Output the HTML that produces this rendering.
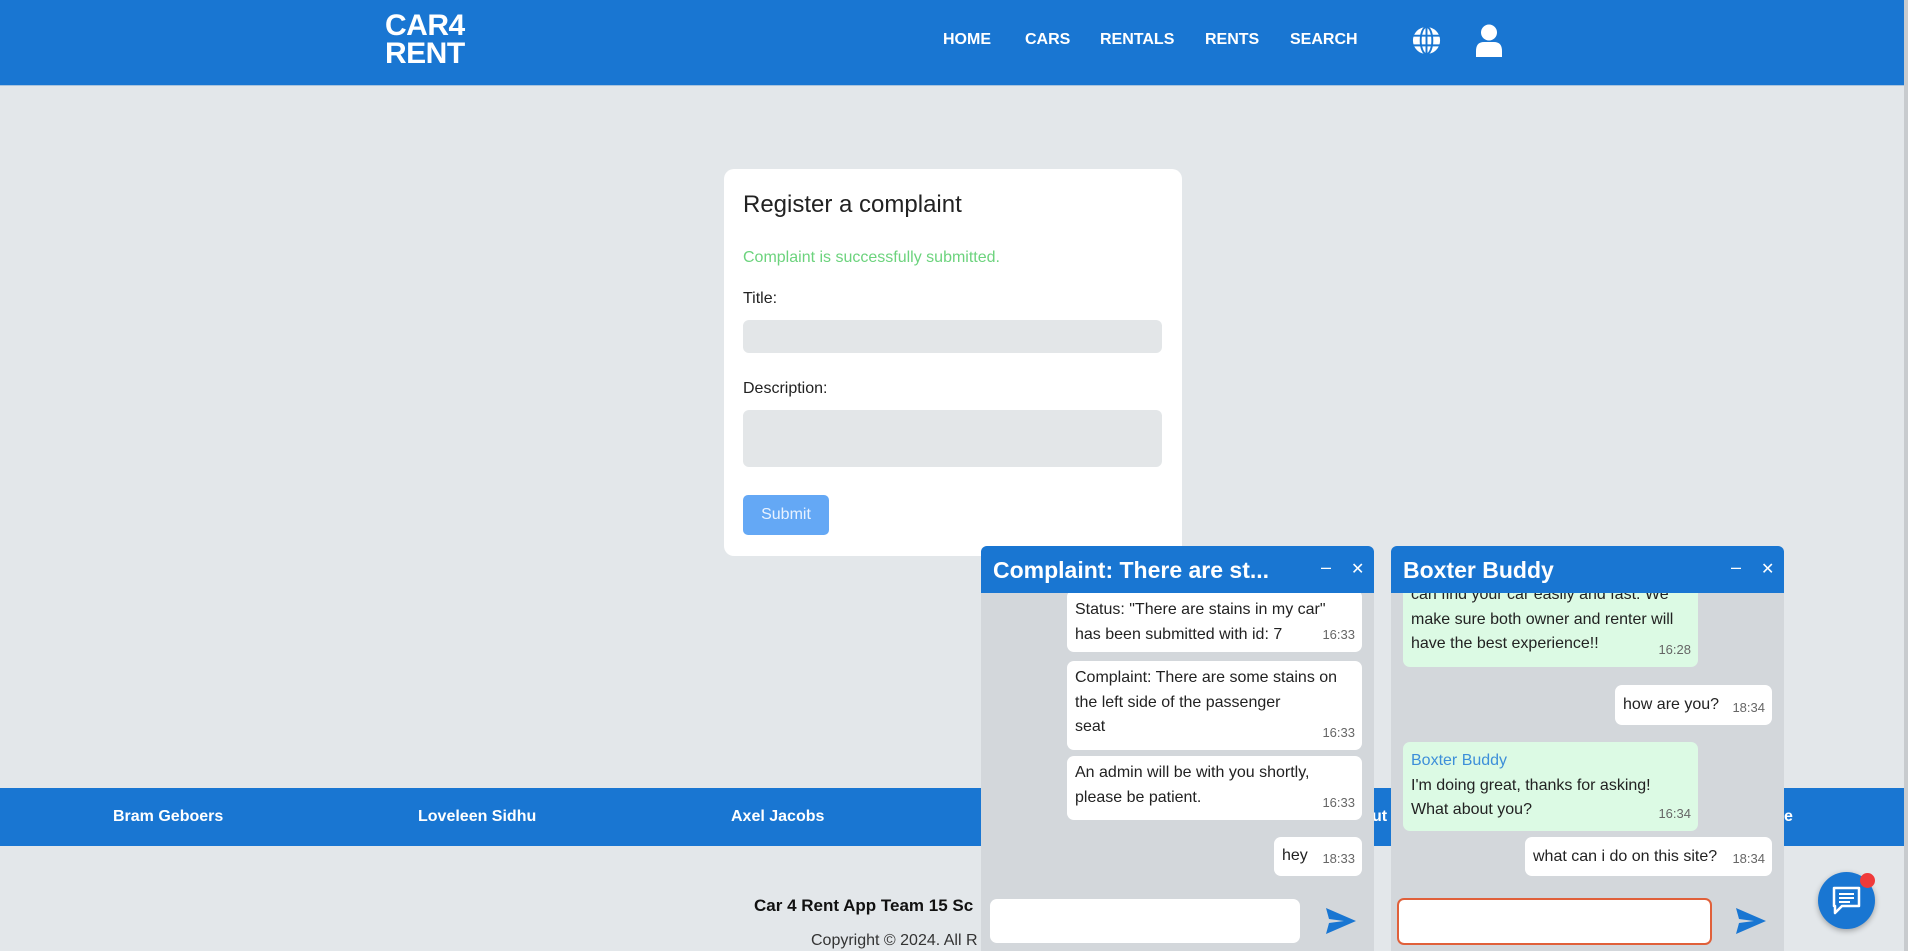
<!DOCTYPE html>
<html><head><meta charset="utf-8"><style>
*{box-sizing:border-box;margin:0;padding:0}
body{width:1908px;height:951px;overflow:hidden;background:#e3e7ea;font-family:"Liberation Sans",sans-serif;position:relative;color:#222}
.a{position:absolute}
.hdr{left:0;top:0;width:1904px;height:86px;background:#1976d2;border-bottom:1px solid #a9c4de}
.logo{left:385px;top:12px;color:#fff;font-weight:bold;font-size:30px;line-height:28px;letter-spacing:-0.5px}
.nav{color:#fff;font-weight:bold;font-size:16px;top:31px}
.sb{left:1904px;top:0;width:4px;height:951px;background:#c8cbce}
.card{left:724px;top:169px;width:458px;height:387px;background:#fff;border-radius:10px}
.foot{left:0;top:788px;width:1904px;height:58px;background:#1976d2}
.fn{color:#fff;font-size:16px;font-weight:bold;top:808px}
.chat{width:393px;height:405px;top:546px;background:#d3d7db;overflow:hidden;border-radius:6px 6px 0 0}
.ch{left:0;top:0;width:100%;height:47px;background:#1976d2;color:#fff;font-weight:bold;font-size:23px;padding:11px 0 0 12px;z-index:2}
.ctl{color:#fff;font-size:18px;top:11px;z-index:3}
.b{position:absolute;background:#fff;border-radius:7px;font-size:16px;line-height:24.5px;padding:5px 8px;color:#222}
.g{background:#dcfae4}
.t{position:absolute;right:7px;bottom:5px;font-size:13px;color:#666}
.in{position:absolute;background:#fff;border-radius:7px}
</style></head><body>
<div class="a hdr"></div>
<div class="a logo">CAR4<br>RENT</div>
<div class="a nav" style="left:943px">HOME</div>
<div class="a nav" style="left:1025px">CARS</div>
<div class="a nav" style="left:1100px">RENTALS</div>
<div class="a nav" style="left:1205px">RENTS</div>
<div class="a nav" style="left:1290px">SEARCH</div>
<svg class="a" style="left:1411px;top:25px" width="31" height="31" viewBox="0 0 32 32"><circle cx="16" cy="16" r="14" fill="#fff"/><g stroke="#1976d2" stroke-width="2" fill="none"><ellipse cx="16" cy="16" rx="6" ry="14"/><line x1="16" y1="2" x2="16" y2="30"/><line x1="2" y1="11" x2="30" y2="11"/><line x1="2" y1="21" x2="30" y2="21"/></g></svg>
<svg class="a" style="left:1474px;top:24px" width="30" height="33" viewBox="0 0 30 33"><circle cx="15" cy="8.5" r="8" fill="#fff"/><path d="M2 33 V27 Q2 18 10 18 H20 Q28 18 28 27 V33Z" fill="#fff"/></svg>
<div class="a sb"></div>

<div class="a card">
<div class="a" style="left:19px;top:22px;font-size:24px;color:#222">Register a complaint</div>
<div class="a" style="left:19px;top:80px;font-size:16px;color:#6cd37d">Complaint is successfully submitted.</div>
<div class="a" style="left:19px;top:121px;font-size:16px">Title:</div>
<div class="a" style="left:19px;top:151px;width:419px;height:33px;background:#e3e6e8;border-radius:6px"></div>
<div class="a" style="left:19px;top:211px;font-size:16px">Description:</div>
<div class="a" style="left:19px;top:241px;width:419px;height:57px;background:#e3e6e8;border-radius:6px"></div>
<div class="a" style="left:19px;top:326px;width:86px;height:40px;background:#64a8f5;border-radius:5px;color:#e8f2ff;font-size:16px;text-align:center;line-height:40px">Submit</div>
</div>

<div class="a foot"></div>
<div class="a fn" style="left:113px">Bram Geboers</div>
<div class="a fn" style="left:418px">Loveleen Sidhu</div>
<div class="a fn" style="left:731px">Axel Jacobs</div>
<div class="a fn" style="left:1372px">ut</div>
<div class="a fn" style="left:1784px">e</div>
<div class="a" style="left:754px;top:896px;font-size:17px;font-weight:bold;color:#111">Car 4 Rent App Team 15 Sc</div>
<div class="a" style="left:811px;top:932px;font-size:16px;color:#333">Copyright © 2024. All R</div>

<div class="a chat" style="left:981px">
<div class="a ch">Complaint: There are st...</div>
<div class="a ctl" style="left:340px">–</div><div class="a ctl" style="left:370px;font-size:16px;top:13px">✕</div>
<div class="b" style="left:86px;top:44px;width:295px;height:62px;padding-top:8px">Status: "There are stains in my car"<br>has been submitted with id: 7<span class="t">16:33</span></div>
<div class="b" style="left:86px;top:115px;width:295px;height:89px">Complaint: There are some stains on<br>the left side of the passenger<br>seat<span class="t">16:33</span></div>
<div class="b" style="left:86px;top:210px;width:295px;height:64px">An admin will be with you shortly,<br>please be patient.<span class="t">16:33</span></div>
<div class="b" style="left:293px;top:291px;width:88px;height:39px;padding-top:7px">hey<span class="t">18:33</span></div>
<div class="in" style="left:9px;top:353px;width:310px;height:44px"></div>
<svg class="a" style="left:345px;top:362px" width="30" height="26" viewBox="0 0 30 26"><path d="M0 0 L30 13 L0 26 L3 15 L18 13 L3 11Z" fill="#1976d2"/></svg>
</div>

<div class="a chat" style="left:1391px">
<div class="a ch">Boxter Buddy</div>
<div class="a ctl" style="left:340px">–</div><div class="a ctl" style="left:370px;font-size:16px;top:13px">✕</div>
<div class="b g" style="left:12px;top:24px;width:295px;height:97px;padding-top:13px">can find your car easily and fast. We<br>make sure both owner and renter will<br>have the best experience!!<span class="t">16:28</span></div>
<div class="b" style="left:224px;top:139px;width:157px;height:40px;padding-top:8px">how are you?<span class="t">18:34</span></div>
<div class="b g" style="left:12px;top:196px;width:295px;height:89px;padding-top:7px"><span style="color:#3d8fd9">Boxter Buddy</span><br>I'm doing great, thanks for asking!<br>What about you?<span class="t">16:34</span></div>
<div class="b" style="left:134px;top:291px;width:247px;height:39px;padding-top:8px">what can i do on this site?<span class="t">18:34</span></div>
<div class="in" style="left:6px;top:352px;width:315px;height:47px;border:2px solid #e0603a"></div>
<svg class="a" style="left:345px;top:362px" width="30" height="26" viewBox="0 0 30 26"><path d="M0 0 L30 13 L0 26 L3 15 L18 13 L3 11Z" fill="#1976d2"/></svg>
</div>

<div class="a" style="left:1818px;top:872px;width:57px;height:57px;border-radius:50%;background:#1976d2;box-shadow:0 2px 6px rgba(0,0,0,.3)"></div>
<svg class="a" style="left:1831px;top:886px" width="31" height="30" viewBox="0 0 31 30"><path d="M3 2 H28 V20 H11 L4 27 V20 H3Z" fill="none" stroke="#fff" stroke-width="2.5" stroke-linejoin="round"/><g stroke="#fff" stroke-width="2"><line x1="8" y1="8" x2="23" y2="8"/><line x1="8" y1="12" x2="23" y2="12"/><line x1="8" y1="16" x2="19" y2="16"/></g></svg>
<div class="a" style="left:1860px;top:873px;width:15px;height:15px;border-radius:50%;background:#f03a3a"></div>
</body></html>
